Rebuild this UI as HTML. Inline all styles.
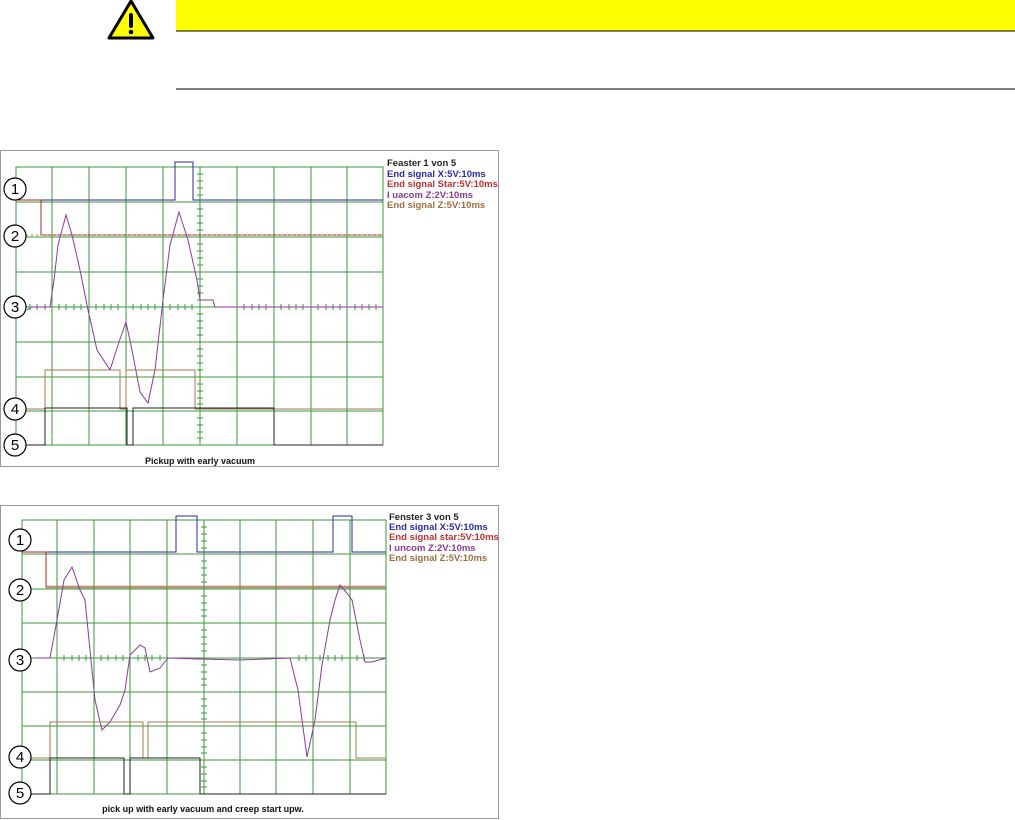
<!DOCTYPE html>
<html><head><style>
body{margin:0;width:1015px;height:820px;background:#fff;overflow:hidden;position:relative;font-family:"Liberation Sans",sans-serif}
svg{position:absolute;left:0;top:0}
</style></head><body>
<svg width="1015" height="820" viewBox="0 0 1015 820">
<rect x="176" y="0" width="839" height="31" fill="#ffff00"/>
<line x1="176" y1="31" x2="1015" y2="31" stroke="#000" stroke-width="1"/>
<line x1="176" y1="89" x2="1015" y2="89" stroke="#000" stroke-width="1"/>
<polygon points="131,1 153,38 109,38" fill="#ffff00" stroke="#000" stroke-width="3" stroke-linejoin="round"/>
<rect x="129" y="13" width="4" height="15" rx="2" fill="#000"/>
<circle cx="131" cy="32" r="2.3" fill="#000"/>

<!-- Panel 1 -->
<rect x="0.5" y="150.5" width="498" height="316" fill="#fff" stroke="#999"/>
<g stroke="#3a9a3a" stroke-width="1" fill="none">
<rect x="16" y="167" width="367" height="278"/>
<path d="M52 167V445M89 167V445M126 167V445M163 167V445M200 167V445M237 167V445M274 167V445M311 167V445M347 167V445M16 202H383M16 237H383M16 272H383M16 307H383M16 342H383M16 377H383M16 411H383"/>
</g>
<g stroke="#3a9a3a" stroke-width="1">
<path d="M197 174H203M197 181H203M197 188H203M197 195H203M197 209H203M197 216H203M197 223H203M197 230H203M197 244H203M197 251H203M197 258H203M197 265H203M197 279H203M197 286H203M197 293H203M197 300H203M197 314H203M197 321H203M197 328H203M197 335H203M197 349H203M197 356H203M197 363H203M197 370H203M197 384H203M197 391H203M197 398H203M197 404H203M197 418H203M197 425H203M197 432H203M197 438H203"/>
<path d="M30 304V310M37 304V310M45 304V310M59 304V310M66 304V310M74 304V310M81 304V310M96 304V310M104 304V310M111 304V310M118 304V310M133 304V310M141 304V310M148 304V310M155 304V310M170 304V310M178 304V310M185 304V310M192 304V310M244 304V310M252 304V310M259 304V310M266 304V310M281 304V310M289 304V310M296 304V310M303 304V310M318 304V310M326 304V310M333 304V310M340 304V310M355 304V310M362 304V310M369 304V310M376 304V310"/>
</g>
<polyline fill="none" stroke="#2a2aa0" points="16,200 175,200 175,162 193,162 193,200 383,200"/>
<polyline fill="none" stroke="#b02020" points="16,200 41,200 41,235 383,235"/>
<line x1="16" y1="235" x2="383" y2="235" stroke="#a08050" stroke-dasharray="2,3"/>
<polyline fill="none" stroke="#8a3a9a" points="27,310 32,307 50,307 54,280 58,245 66,215 72,235 80,270 88,310 97,350 110,370 118,345 126,322 132,350 140,392 148,403 155,370 163,300 170,245 179,212 188,240 197,280 200,300 213,300 215,307 383,307"/>
<polyline fill="none" stroke="#a07a50" points="16,409 45,409 45,370 120,370 120,409 126,409 126,370 195,370 195,409 383,409"/>
<polyline fill="none" stroke="#222" points="16,445 45,445 45,408 127,408 127,445 133,445 133,408 274,408 274,445 383,445"/>
<g fill="#fff" stroke="#000" stroke-width="1.2">
<circle cx="15" cy="189" r="11"/><circle cx="15" cy="236" r="11"/><circle cx="15" cy="307" r="11"/><circle cx="15" cy="409" r="11"/><circle cx="15" cy="445" r="11"/></g>
<g font-size="15" text-anchor="middle" font-family="Liberation Sans,sans-serif"><text x="15" y="194">1</text><text x="15" y="241">2</text><text x="15" y="312">3</text><text x="15" y="414">4</text><text x="15" y="450">5</text></g>
<g font-size="9.5" font-weight="bold" font-family="Liberation Sans,sans-serif">
<text x="387" y="166" fill="#222">Feaster 1 von 5</text>
<text x="387" y="177" fill="#2a2ab0">End signal X:5V:10ms</text>
<text x="387" y="187" fill="#c03030">End signal Star:5V:10ms</text>
<text x="387" y="198" fill="#8a3a9a">I uacom Z:2V:10ms</text>
<text x="387" y="208" fill="#9a7040">End signal Z:5V:10ms</text>
<text x="200" y="464" fill="#111" text-anchor="middle" font-size="9">Pickup with early vacuum</text>
</g>

<!-- Panel 2 -->
<rect x="0.5" y="505.5" width="498" height="313" fill="#fff" stroke="#999"/>
<g stroke="#3a9a3a" stroke-width="1" fill="none">
<rect x="22" y="520" width="364" height="274"/>
<path d="M57 520V794M94 520V794M130 520V794M167 520V794M204 520V794M240 520V794M276 520V794M313 520V794M350 520V794M22 554H386M22 589H386M22 623H386M22 658H386M22 692H386M22 726H386M22 760H386"/>
</g>
<g stroke="#3a9a3a" stroke-width="1">
<path d="M201 527H207M201 534H207M201 541H207M201 548H207M201 561H207M201 568H207M201 575H207M201 582H207M201 596H207M201 603H207M201 610H207M201 616H207M201 630H207M201 637H207M201 644H207M201 651H207M201 665H207M201 672H207M201 679H207M201 685H207M201 699H207M201 706H207M201 713H207M201 719H207M201 733H207M201 740H207M201 747H207M201 753H207M201 767H207M201 774H207M201 781H207M201 787H207"/>
<path d="M64 655V661M72 655V661M79 655V661M86 655V661M101 655V661M108 655V661M116 655V661M123 655V661M138 655V661M145 655V661M152 655V661M160 655V661M299 655V661M306 655V661M320 655V661M328 655V661M335 655V661M342 655V661M357 655V661M364 655V661"/>
</g>
<polyline fill="none" stroke="#2a2aa0" points="22,552 176,552 176,516 197,516 197,552 333,552 333,516 352,516 352,552 386,552"/>
<polyline fill="none" stroke="#b02020" points="22,552 46,552 46,587 386,587"/>
<line x1="46" y1="587" x2="386" y2="587" stroke="#b09070" stroke-width="3" opacity="0.6"/>
<polyline fill="none" stroke="#8a3a9a" points="35,658 50,658 57,620 64,580 72,567 80,590 85,600 90,650 95,700 102,730 110,722 120,705 125,690 130,655 140,645 145,648 150,672 160,668 168,658 200,659 240,660 290,658 298,690 307,757 315,720 322,665 330,620 335,600 340,585 346,592 352,600 360,640 365,662 372,662 386,658"/>
<polyline fill="none" stroke="#a07a50" points="22,758 50,758 50,722 143,722 143,758 148,758 148,722 356,722 356,758 386,758"/>
<polyline fill="none" stroke="#222" points="22,794 50,794 50,758 124,758 124,794 130,794 130,758 200,758 200,794 386,794"/>
<g fill="#fff" stroke="#000" stroke-width="1.2">
<circle cx="20" cy="540" r="11"/><circle cx="20" cy="590" r="11"/><circle cx="20" cy="660" r="11"/><circle cx="20" cy="757" r="11"/><circle cx="20" cy="793" r="11"/></g>
<g font-size="15" text-anchor="middle" font-family="Liberation Sans,sans-serif"><text x="20" y="545">1</text><text x="20" y="595">2</text><text x="20" y="665">3</text><text x="20" y="762">4</text><text x="20" y="798">5</text></g>
<g font-size="9.5" font-weight="bold" font-family="Liberation Sans,sans-serif">
<text x="389" y="520" fill="#222">Fenster 3 von 5</text>
<text x="389" y="530" fill="#2a2ab0">End signal X:5V:10ms</text>
<text x="389" y="540" fill="#c03030">End signal star:5V:10ms</text>
<text x="389" y="551" fill="#8a3a9a">I uncom Z:2V:10ms</text>
<text x="389" y="561" fill="#9a7040">End signal Z:5V:10ms</text>
<text x="203" y="812" fill="#111" text-anchor="middle" font-size="9">pick up with early vacuum and creep start upw.</text>
</g>
</svg>
</body></html>
